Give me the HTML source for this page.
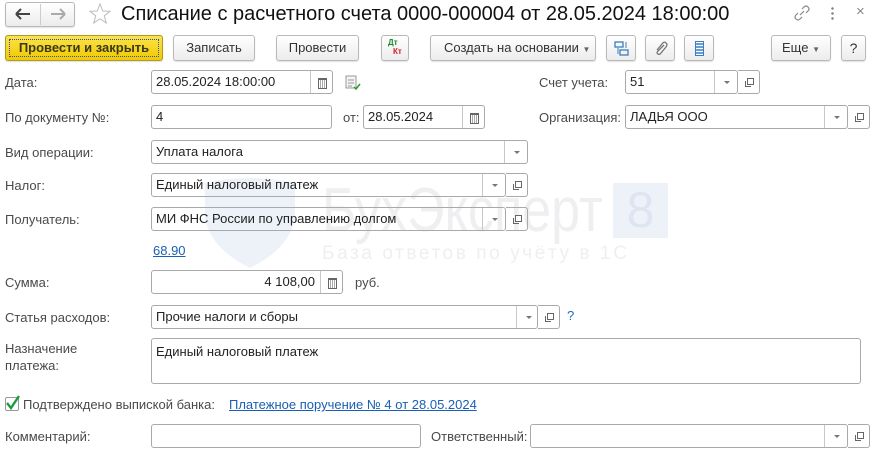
<!DOCTYPE html>
<html><head><meta charset="utf-8">
<style>
*{box-sizing:border-box;margin:0;padding:0}
body{width:873px;height:451px;background:#fff;font-family:"Liberation Sans",Arial,sans-serif;font-size:13px;color:#333;position:relative;overflow:hidden}
.a{position:absolute}
.lbl{position:absolute;color:#4a4a4a;font-size:13px;line-height:16px}
.inp{position:absolute;height:24px;border:1px solid #a9a9a9;border-radius:3px;background:#fff;line-height:22px;padding-left:4px;color:#222;white-space:nowrap;overflow:hidden}
.btn{position:absolute;height:26px;border:1px solid #b9b9b9;border-radius:3px;background:linear-gradient(#fff,#ececec);box-shadow:0 1px 1px rgba(0,0,0,.12);text-align:center;line-height:24px;color:#333;font-size:13px}
.dd{position:absolute;top:0;bottom:0;border-left:1px solid #c8c8c8;width:23px}
.dd:after{content:"";position:absolute;left:9px;top:10px;border-left:3px solid transparent;border-right:3px solid transparent;border-top:3px solid #777}
.op{position:absolute;height:24px;width:22px;border:1px solid #a9a9a9;border-left:none;border-radius:0 3px 3px 0;background:#fff}
.op:before{content:"";position:absolute;left:7px;top:10px;width:5px;height:5px;border:1px solid #666;border-right:none;border-top:none}
.op:after{content:"";position:absolute;left:9px;top:7px;width:5px;height:5px;border:1px solid #666;background:#fff}
.cal{position:absolute;top:0;bottom:0;border-left:1px solid #c8c8c8;width:22px}
.cal:after{content:"";position:absolute;left:7px;top:7px;width:7px;height:8px;border:1px solid #666;border-top-width:2px;background:repeating-linear-gradient(90deg,#fff 0 1px,#aaa 1px 2px)}
.link{position:absolute;color:#1a5fb4;text-decoration:underline}
</style></head><body>

<!-- watermark -->
<svg class="a" style="left:200px;top:178px" width="100" height="92"><path d="M5 5 Q50 -5 95 5 L95 40 Q90 70 50 90 Q10 70 5 40Z" fill="#edf2f8"/></svg>
<div class="a" style="left:322px;top:176px;font-size:62px;color:#efeff1;line-height:70px;transform:scaleX(0.84);transform-origin:0 0;white-space:nowrap">БухЭксперт</div>
<div class="a" style="left:613px;top:183px;width:55px;height:55px;background:#ecf2f8;color:#dde6f0;font-size:50px;line-height:55px;text-align:center">8</div>
<div class="a" style="left:322px;top:243px;font-size:19px;color:#efeff1;letter-spacing:2.6px;line-height:22px;white-space:nowrap">База ответов по учёту в 1С</div>

<!-- title bar -->
<div class="btn" style="left:5px;top:2px;width:70px;height:25px;line-height:22px"></div>
<div class="a" style="left:40px;top:4px;width:1px;height:21px;background:#ccc"></div>
<svg class="a" style="left:14px;top:7px" width="18" height="14"><path d="M2 7h14M2 7l5-5M2 7l5 5" fill="none" stroke="#444" stroke-width="2"/></svg>
<svg class="a" style="left:49px;top:7px" width="18" height="14"><path d="M16 7H2M16 7l-5-5M16 7l-5 5" fill="none" stroke="#aaa" stroke-width="2"/></svg>
<svg class="a" style="left:88px;top:2px" width="24" height="23"><path d="M12 2 L14.8 9 L22 9.3 L16.3 13.8 L18.3 21 L12 16.8 L5.7 21 L7.7 13.8 L2 9.3 L9.2 9Z" fill="none" stroke="#bbb" stroke-width="1"/></svg>
<div class="a" style="left:121px;top:2px;font-size:20px;color:#111;line-height:24px">Списание с расчетного счета 0000-000004 от 28.05.2024 18:00:00</div>
<svg class="a" style="left:793px;top:4px" width="18" height="18"><path d="M7 11 L11 7 M9 5 L11 3 Q13 1 15 3 Q17 5 15 7 L13 9 M5 9 L3 11 Q1 13 3 15 Q5 17 7 15 L9 13" fill="none" stroke="#888" stroke-width="1.2"/></svg>
<div class="a" style="left:831px;top:6px;width:3px;height:14px;background:radial-gradient(circle,#888 1.2px,transparent 1.4px) 0 0/3px 5px"></div>
<div class="a" style="left:856px;top:3px;font-size:15px;color:#888">×</div>

<!-- toolbar -->
<div class="btn" style="left:5px;top:35px;width:158px;background:linear-gradient(#fbe34a,#f1c900);border-color:#b09a20;font-weight:bold;color:#3a3a1a;"><div style="position:absolute;inset:3px;border:1px dotted #3050a0;line-height:16px">Провести и закрыть</div></div>
<div class="btn" style="left:173px;top:35px;width:82px">Записать</div>
<div class="btn" style="left:276px;top:35px;width:83px">Провести</div>
<div class="btn" style="left:381px;top:35px;width:28px"><span class="a" style="left:6px;top:2px;font-size:8px;color:#1a8a2a;line-height:9px;font-weight:bold">Дт</span><span class="a" style="left:11px;top:11px;font-size:8px;color:#d02020;line-height:9px;font-weight:bold">Кт</span></div>
<div class="btn" style="left:430px;top:35px;width:166px;text-align:left;padding-left:13px">Создать на основании <span style="font-size:8px;color:#666">▼</span></div>
<div class="btn" style="left:606px;top:35px;width:30px"><svg class="a" style="left:7px;top:5px" width="16" height="16"><rect x="1" y="1" width="8" height="5" fill="none" stroke="#3a7dc0" stroke-width="1.3"/><rect x="6" y="9" width="8" height="5" fill="none" stroke="#3a7dc0" stroke-width="1.3"/><path d="M12 1v6M4 7v6" stroke="#3a7dc0"/></svg></div>
<div class="btn" style="left:645px;top:35px;width:30px"><svg class="a" style="left:8px;top:5px" width="14" height="16"><path d="M10 4 L4 10 Q2 12 4 13 Q6 14 7 12 L12 6 Q14 3 12 2 Q10 0 8 3 L3 9" fill="none" stroke="#777" stroke-width="1.3"/></svg></div>
<div class="btn" style="left:684px;top:35px;width:30px"><div class="a" style="left:10px;top:5px;width:9px;height:15px;border:1px solid #3a7dc0;background:repeating-linear-gradient(#fff 0 1px,#6a9ed0 1px 3px)"></div></div>
<div class="btn" style="left:771px;top:35px;width:60px">Еще <span style="font-size:8px;color:#666">▼</span></div>
<div class="btn" style="left:841px;top:35px;width:25px;font-size:14px">?</div>

<!-- row 1 -->
<div class="lbl" style="left:5px;top:75px">Дата:</div>
<div class="inp" style="left:151px;top:70px;width:182px">28.05.2024 18:00:00<div class="cal" style="right:0"></div></div>
<svg class="a" style="left:345px;top:75px" width="16" height="16"><rect x="1" y="1" width="10" height="12" fill="#f4f4f4" stroke="#999"/><path d="M3 5h6M3 8h6M3 11h4" stroke="#999"/><path d="M9 12 L11 14 L15 9" fill="none" stroke="#2a9a2a" stroke-width="1.5"/></svg>
<div class="lbl" style="left:539px;top:75px">Счет учета:</div>
<div class="inp" style="left:625px;top:70px;width:113px">51<div class="dd" style="right:0"></div></div>
<div class="op" style="left:738px;top:70px"></div>

<!-- row 2 -->
<div class="lbl" style="left:5px;top:110px">По документу №:</div>
<div class="inp" style="left:151px;top:105px;width:181px">4</div>
<div class="lbl" style="left:343px;top:110px">от:</div>
<div class="inp" style="left:363px;top:105px;width:122px">28.05.2024<div class="cal" style="right:0"></div></div>
<div class="lbl" style="left:539px;top:110px">Организация:</div>
<div class="inp" style="left:625px;top:105px;width:223px">ЛАДЬЯ ООО<div class="dd" style="right:0"></div></div>
<div class="op" style="left:848px;top:105px"></div>

<!-- row 3 -->
<div class="lbl" style="left:5px;top:145px">Вид операции:</div>
<div class="inp" style="left:151px;top:140px;width:377px">Уплата налога<div class="dd" style="right:0"></div></div>

<div class="lbl" style="left:5px;top:178px">Налог:</div>
<div class="inp" style="left:151px;top:173px;width:355px;background:transparent">Единый налоговый платеж<div class="dd" style="right:0"></div></div>
<div class="op" style="left:506px;top:173px;background:transparent"></div>

<div class="lbl" style="left:5px;top:212px">Получатель:</div>
<div class="inp" style="left:151px;top:207px;width:355px;background:transparent">МИ ФНС России по управлению долгом<div class="dd" style="right:0"></div></div>
<div class="op" style="left:506px;top:207px;background:transparent"></div>

<div class="link" style="left:153px;top:243px">68.90</div>

<div class="lbl" style="left:5px;top:275px">Сумма:</div>
<div class="inp" style="left:151px;top:270px;width:192px;text-align:right;padding-right:27px">4 108,00<div class="cal" style="right:0"></div></div>
<div class="lbl" style="left:355px;top:275px">руб.</div>

<div class="lbl" style="left:5px;top:310px">Статья расходов:</div>
<div class="inp" style="left:151px;top:305px;width:387px">Прочие налоги и сборы<div class="dd" style="right:0;width:21px"></div></div>
<div class="op" style="left:538px;top:305px"></div>
<div class="a" style="left:567px;top:308px;color:#1a6fc0;font-size:13px">?</div>

<div class="lbl" style="left:5px;top:340px;line-height:17px">Назначение<br>платежа:</div>
<div class="inp" style="left:151px;top:338px;width:710px;height:46px;line-height:16px;padding-top:5px">Единый налоговый платеж</div>

<div class="a" style="left:5px;top:397px;width:14px;height:14px;border:1px solid #999;border-radius:2px;background:#fff"></div>
<svg class="a" style="left:4px;top:393px" width="18" height="18"><path d="M3 10 L7 15 L15 3" fill="none" stroke="#1f9a3a" stroke-width="2.4"/></svg>
<div class="lbl" style="left:23px;top:397px">Подтверждено выпиской банка:</div>
<div class="link" style="left:229px;top:397px">Платежное поручение № 4 от 28.05.2024</div>

<div class="lbl" style="left:5px;top:429px">Комментарий:</div>
<div class="inp" style="left:151px;top:424px;width:270px"></div>
<div class="lbl" style="left:431px;top:429px">Ответственный:</div>
<div class="inp" style="left:530px;top:424px;width:318px"><div class="dd" style="right:0"></div></div>
<div class="op" style="left:848px;top:424px"></div>

</body></html>
